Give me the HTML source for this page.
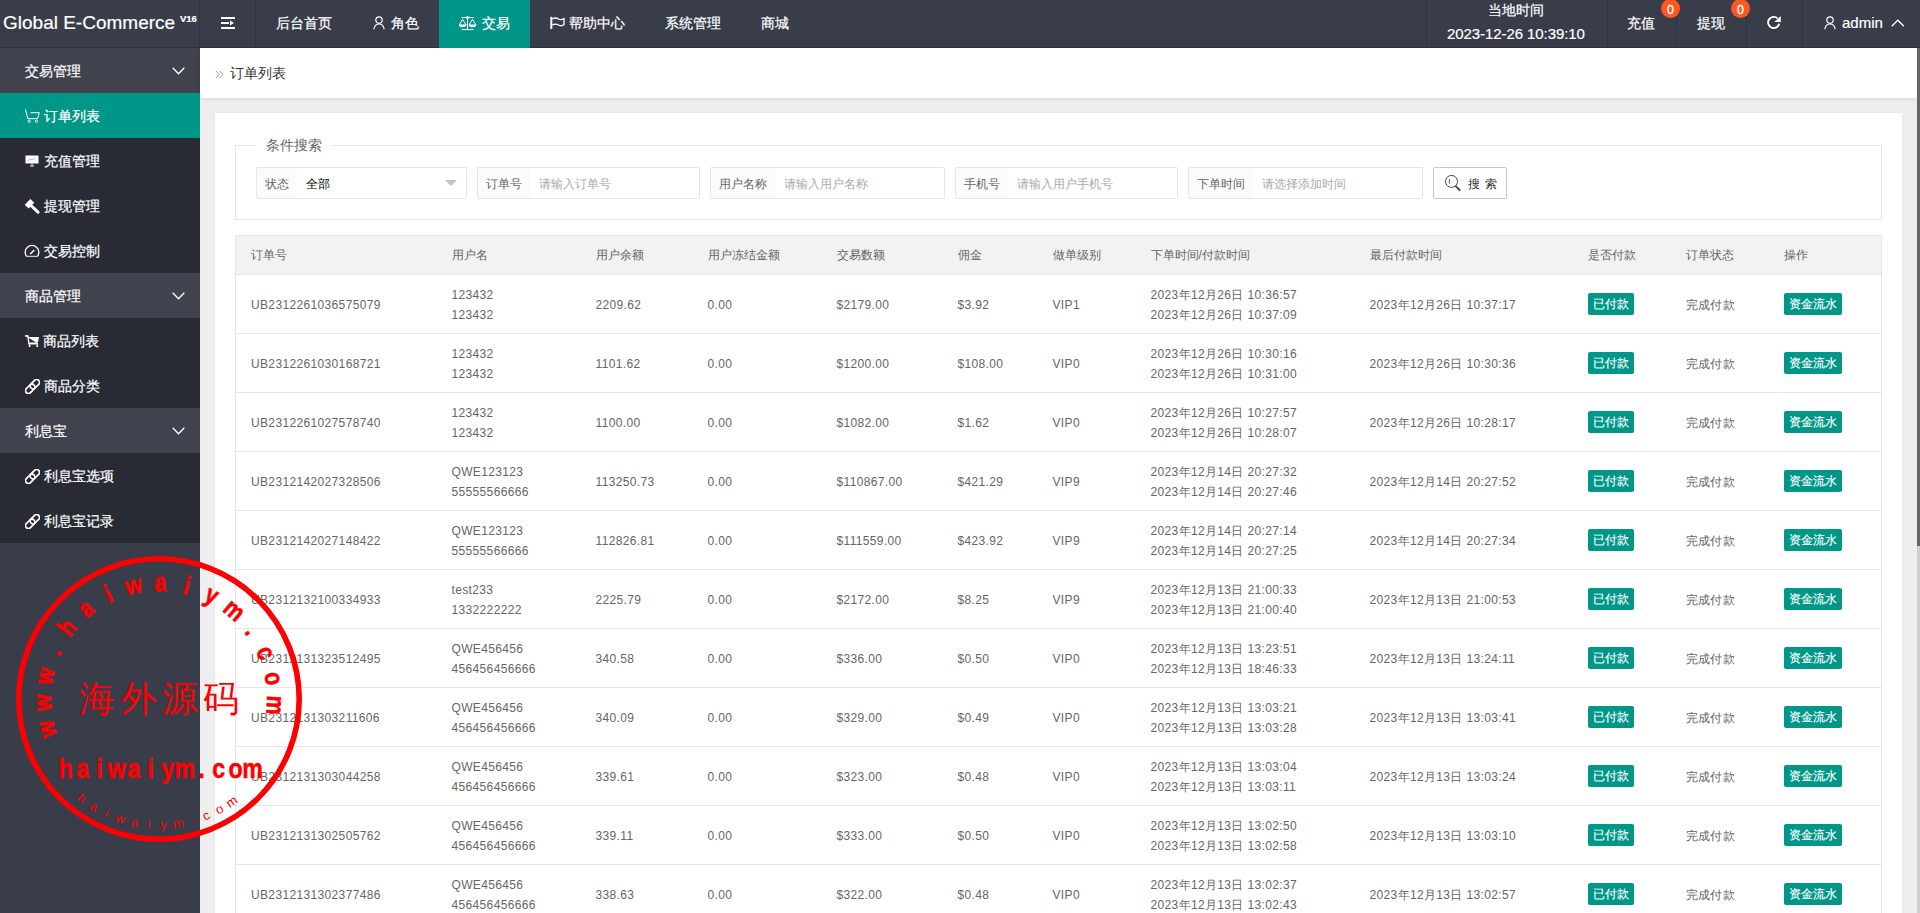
<!DOCTYPE html>
<html><head><meta charset="utf-8">
<style>
*{box-sizing:border-box;margin:0;padding:0}
html,body{width:1920px;height:913px;overflow:hidden}
body{font-family:"Liberation Sans",sans-serif;background:#eee;position:relative;color:#666}
.abs{position:absolute}
#hdr{left:0;top:0;width:1920px;height:48px;background:#393c49;border-bottom:1px solid #2f323e}
.ht{position:absolute;color:#fff;font-size:14px;line-height:16px;white-space:nowrap;-webkit-text-stroke:0.2px #fff}
.vsep{position:absolute;top:0;width:1px;height:47px;background:#30333f}
#side{left:0;top:48px;width:200px;height:865px;background:#393c49}
.grp{position:absolute;left:0;width:200px;height:45px;background:#40434d}
.child{position:absolute;left:0;width:200px;background:#282b34}
.si{position:absolute;color:#fff;font-size:14px;line-height:16px;white-space:nowrap;-webkit-text-stroke:0.2px #fff}
#crumb{left:200px;top:48px;width:1717px;height:50px;background:#fff;box-shadow:0 1px 4px rgba(0,0,0,.1)}
#card{left:215px;top:113px;width:1687px;height:850px;background:#fff;box-shadow:0 1px 3px rgba(0,0,0,.05)}
.fs{position:absolute;left:235px;top:145px;width:1647px;height:75px;border:1px solid #e6e6e6;border-top:none}
.lbl{position:absolute;height:32px;border:1px solid #e6e6e6;background:#fbfbfb;border-radius:2px 0 0 2px;font-size:12px;line-height:32px;color:#666;text-align:center}
.inp{position:absolute;height:32px;border:1px solid #e6e6e6;border-left:none;background:#fff;border-radius:0 2px 2px 0;font-size:12px;line-height:32px;color:#aaa;padding-left:9px}
table{position:absolute;left:235px;top:235px;width:1646px;border-collapse:collapse;table-layout:fixed;font-size:12px;color:#666}
th{height:39px;background:#f2f2f2;font-weight:normal;text-align:left;padding-left:15px;border-top:1px solid #e6e6e6;border-bottom:1px solid #e6e6e6}
td{height:59px;text-align:left;padding-left:15px;padding-top:2px;letter-spacing:0.35px;border-bottom:1px solid #e6e6e6;line-height:20px;white-space:nowrap}
tr td:first-child,tr th:first-child{border-left:1px solid #e6e6e6}
tr td:last-child,tr th:last-child{border-right:1px solid #e6e6e6}
.bdg{display:inline-block;letter-spacing:0;-webkit-text-stroke:0.15px #fff;position:relative;top:-1px;height:22px;line-height:22px;padding:0 5px;background:#009688;color:#fff;border-radius:2px}
#sb{left:1917px;top:48px;width:3px;height:865px;background:#cfcfcf}
#sbt{left:1917px;top:48px;width:3px;height:498px;background:#666}
</style></head><body>

<div id="hdr" class="abs"></div>
<div class="ht" style="left:3px;top:11.5px;font-size:19px;line-height:22px">Global E-Commerce</div><div class="ht" style="left:180px;top:13px;font-size:9.5px;line-height:11px;font-weight:bold">V16</div>
<div class="vsep" style="left:199px"></div>
<div class="vsep" style="left:255px"></div>
<!-- menu icon -->
<svg class="abs" style="left:221px;top:17px" width="14" height="12" viewBox="0 0 14 12"><rect x="0" y="0" width="14" height="2" fill="#fff"/><rect x="0" y="5" width="8" height="2" fill="#fff"/><rect x="0" y="10" width="14" height="2" fill="#fff"/><path d="M9 3.5 L13 6 L9 8.5Z" fill="#fff"/></svg>
<div class="ht" style="left:276px;top:15px">后台首页</div>
<svg class="abs" style="left:373px;top:16px" width="12" height="14" viewBox="0 0 12 14"><circle cx="6" cy="4.1" r="3.2" fill="none" stroke="#fff" stroke-width="1.2"/><path d="M0.9 13.2 C1.3 9.6 3.5 8 6 8 C8.5 8 10.7 9.6 11.1 13.2" fill="none" stroke="#fff" stroke-width="1.2"/></svg>
<div class="ht" style="left:391px;top:15px">角色</div>
<div class="abs" style="left:439px;top:0;width:91px;height:48px;background:#009688"></div>
<svg class="abs" style="left:458px;top:16px" width="19" height="15" viewBox="0 0 19 15"><g stroke="#fff" fill="none" stroke-width="1"><path d="M3.5 1.6 H15.8 M9.5 1.6 V13.6 M3.5 13.6 H15.8"/><circle cx="9.5" cy="1.6" r="1.1" fill="#fff"/><path d="M1.2 9 L4.6 3.3 L8 9 M11.1 9 L14.5 3.3 L17.9 9"/></g><path d="M0.8 8.6 H8.4 A3.8 2.6 0 0 1 0.8 8.6Z M10.7 8.6 H18.3 A3.8 2.6 0 0 1 10.7 8.6Z" fill="#fff"/></svg>
<div class="ht" style="left:482px;top:15px">交易</div>
<svg class="abs" style="left:549px;top:16px" width="17" height="14" viewBox="0 0 17 14"><path d="M2.3 0.8 V13" stroke="#fff" stroke-width="2" fill="none"/><path d="M3.3 3 C5.5 1.6 7.5 1.6 9.5 3 C11.5 4.3 13 3.8 15 2.6 V8.8 C13 10 11.5 10.2 9.5 9 C7.5 7.8 5.5 7.8 3.3 9" stroke="#fff" stroke-width="1.3" fill="none"/></svg>
<div class="ht" style="left:569px;top:15px">帮助中心</div>
<div class="ht" style="left:665px;top:15px">系统管理</div>
<div class="ht" style="left:761px;top:15px">商城</div>

<div class="vsep" style="left:1426px;height:46px"></div>
<div class="ht" style="left:1488px;top:2px">当地时间</div>
<div class="ht" style="left:1447px;top:25px;font-size:15px;line-height:18px;letter-spacing:-0.08px">2023-12-26 10:39:10</div>
<div class="vsep" style="left:1607px"></div>
<div class="ht" style="left:1627px;top:15px">充值</div>

<div class="vsep" style="left:1676px"></div>
<div class="ht" style="left:1697px;top:15px">提现</div>

<div class="vsep" style="left:1746px"></div>
<svg class="abs" style="left:1766px;top:15px" width="16" height="16" viewBox="0 0 16 16"><path d="M13.2 8.6 A5.6 5.6 0 1 1 11.6 3.4" stroke="#fff" stroke-width="1.9" fill="none"/><path d="M8.3 7.1 H14.8 V1.1Z" fill="#fff"/></svg>
<div class="vsep" style="left:1802px"></div>
<div class="abs" style="left:1661px;top:-1px;width:19px;height:19px;border-radius:50%;background:#ff5722;color:#fff;font-size:12.5px;line-height:22px;text-align:center;-webkit-text-stroke:0.3px #fff">0</div>
<div class="abs" style="left:1731px;top:-1px;width:19px;height:19px;border-radius:50%;background:#ff5722;color:#fff;font-size:12.5px;line-height:22px;text-align:center;-webkit-text-stroke:0.3px #fff">0</div>

<svg class="abs" style="left:1824px;top:16px" width="12" height="14" viewBox="0 0 12 14"><circle cx="6" cy="4.1" r="3.2" fill="none" stroke="#fff" stroke-width="1.2"/><path d="M0.9 13.2 C1.3 9.6 3.5 8 6 8 C8.5 8 10.7 9.6 11.1 13.2" fill="none" stroke="#fff" stroke-width="1.2"/></svg>
<div class="ht" style="left:1842px;top:14px;font-size:15px;line-height:18px">admin</div>
<svg class="abs" style="left:1891px;top:18.5px" width="14" height="8" viewBox="0 0 14 8"><path d="M0.7 7.2 L6.8 1.2 L12.9 7.2" stroke="#fff" stroke-width="1.3" fill="none"/></svg>

<!-- sidebar -->
<div id="side" class="abs"></div>
<div class="grp" style="top:48px"></div>
<div class="child" style="top:93px;height:180px"></div>
<div class="abs" style="left:0;top:93px;width:200px;height:45px;background:#009688"></div>
<div class="grp" style="top:273px"></div>
<div class="child" style="top:318px;height:90px"></div>
<div class="grp" style="top:408px"></div>
<div class="child" style="top:453px;height:90px"></div>

<div class="si" style="left:25px;top:63px">交易管理</div>
<svg class="abs" style="left:172px;top:67px" width="13" height="8" viewBox="0 0 13 8"><path d="M0.7 0.7 L6.5 6.8 L12.3 0.7" stroke="#fff" stroke-width="1.3" fill="none"/></svg>
<svg class="abs" style="left:25px;top:109px" width="15" height="14" viewBox="0 0 15 14"><path d="M0.4 0.2 L2.8 9.7 H12.6 L14.3 3.7 H5.6" stroke="#fff" stroke-width="1" fill="none"/><circle cx="4.2" cy="12.3" r="1.2" fill="none" stroke="#fff" stroke-width="0.9"/><circle cx="11.4" cy="12.3" r="1.2" fill="none" stroke="#fff" stroke-width="0.9"/></svg>
<div class="si" style="left:44px;top:108px">订单列表</div>
<svg class="abs" style="left:25px;top:155px" width="14" height="12" viewBox="0 0 14 12"><rect x="0.5" y="0.5" width="13" height="8" fill="#fff"/><path d="M2.5 6 L5 4 L7 5 L10.5 3" stroke="#888" stroke-width="0.6" fill="none"/><path d="M7 8.5 V10.5 M5 11 H9" stroke="#fff" stroke-width="1"/></svg>
<div class="si" style="left:44px;top:153px">充值管理</div>
<svg class="abs" style="left:24px;top:198px" width="16" height="16" viewBox="0 0 16 16"><rect x="1.5" y="3" width="8" height="5.5" transform="rotate(-45 5.5 5.75)" fill="#fff"/><path d="M7.5 8 L14 14.2" stroke="#fff" stroke-width="3" stroke-linecap="round"/></svg>
<div class="si" style="left:44px;top:198px">提现管理</div>
<svg class="abs" style="left:24px;top:244px" width="16" height="14" viewBox="0 0 16 14"><path d="M2.6 12.3 A6.8 6.8 0 1 1 13.4 12.3" stroke="#fff" stroke-width="1.3" fill="none"/><path d="M2.2 12.4 H13.8" stroke="#c8c8c8" stroke-width="1.3"/><path d="M6.3 10 L10.3 6" stroke="#fff" stroke-width="1.5"/></svg>
<div class="si" style="left:44px;top:243px">交易控制</div>

<div class="si" style="left:25px;top:288px">商品管理</div>
<svg class="abs" style="left:172px;top:292px" width="13" height="8" viewBox="0 0 13 8"><path d="M0.7 0.7 L6.5 6.8 L12.3 0.7" stroke="#fff" stroke-width="1.3" fill="none"/></svg>
<svg class="abs" style="left:25px;top:335px" width="14" height="13" viewBox="0 0 14 13"><path d="M0 0.5 H3 L3.6 2 H14 L13 7.5 H4.5 L4.5 8.8 H13" stroke="none" fill="#fff"/><path d="M0 1 H2.8 L4 8.7 H13" stroke="#fff" stroke-width="1.4" fill="none"/><rect x="3.8" y="9.5" width="1.6" height="2.5" fill="#fff"/><rect x="11.5" y="9.5" width="1.6" height="2.5" fill="#fff"/></svg>
<div class="si" style="left:43px;top:333px">商品列表</div>
<svg class="abs" style="left:25px;top:379px" width="15" height="15" viewBox="0 0 15 15"><g transform="rotate(-45 7.5 7.5)" stroke="#fff" stroke-width="1.7" fill="none"><path d="M1.7 4.6 H6.699999999999999 A2.9 2.9 0 0 1 6.699999999999999 10.4 H1.7 A2.9 2.9 0 0 1 1.7 4.6 Z"/><path d="M8.3 4.6 H13.299999999999999 A2.9 2.9 0 0 1 13.299999999999999 10.4 H8.3 A2.9 2.9 0 0 1 8.3 4.6 Z"/></g></svg>
<div class="si" style="left:44px;top:378px">商品分类</div>

<div class="si" style="left:25px;top:423px">利息宝</div>
<svg class="abs" style="left:172px;top:427px" width="13" height="8" viewBox="0 0 13 8"><path d="M0.7 0.7 L6.5 6.8 L12.3 0.7" stroke="#fff" stroke-width="1.3" fill="none"/></svg>
<svg class="abs" style="left:25px;top:469px" width="15" height="15" viewBox="0 0 15 15"><g transform="rotate(-45 7.5 7.5)" stroke="#fff" stroke-width="1.7" fill="none"><path d="M1.7 4.6 H6.699999999999999 A2.9 2.9 0 0 1 6.699999999999999 10.4 H1.7 A2.9 2.9 0 0 1 1.7 4.6 Z"/><path d="M8.3 4.6 H13.299999999999999 A2.9 2.9 0 0 1 13.299999999999999 10.4 H8.3 A2.9 2.9 0 0 1 8.3 4.6 Z"/></g></svg>
<div class="si" style="left:44px;top:468px">利息宝选项</div>
<svg class="abs" style="left:25px;top:514px" width="15" height="15" viewBox="0 0 15 15"><g transform="rotate(-45 7.5 7.5)" stroke="#fff" stroke-width="1.7" fill="none"><path d="M1.7 4.6 H6.699999999999999 A2.9 2.9 0 0 1 6.699999999999999 10.4 H1.7 A2.9 2.9 0 0 1 1.7 4.6 Z"/><path d="M8.3 4.6 H13.299999999999999 A2.9 2.9 0 0 1 13.299999999999999 10.4 H8.3 A2.9 2.9 0 0 1 8.3 4.6 Z"/></g></svg>
<div class="si" style="left:44px;top:513px">利息宝记录</div>

<!-- breadcrumb -->
<div id="crumb" class="abs"></div>
<svg class="abs" style="left:215px;top:70px" width="9" height="9" viewBox="0 0 9 9"><path d="M0.8 0.8 L4 4.5 L0.8 8.2 M4.6 0.8 L7.8 4.5 L4.6 8.2" stroke="#999" stroke-width="1" fill="none"/></svg>
<div class="abs" style="left:230px;top:65px;font-size:14px;line-height:16px;color:#333">订单列表</div>

<div id="card" class="abs"></div>
<!-- fieldset -->
<div class="fs"></div>
<div class="abs" style="left:235px;top:145px;width:21px;height:1px;background:#e6e6e6"></div>
<div class="abs" style="left:332px;top:145px;width:1550px;height:1px;background:#e6e6e6"></div>
<div class="abs" style="left:266px;top:137px;font-size:14px;line-height:16px;color:#666">条件搜索</div>

<div class="lbl" style="left:256px;top:167px;width:42px">状态</div>
<div class="inp" style="left:297px;top:167px;width:170px;color:#000">全部</div>
<svg class="abs" style="left:445px;top:180px" width="12" height="6" viewBox="0 0 12 6"><path d="M0 0 H12 L6 6Z" fill="#c2c2c2"/></svg>
<div class="lbl" style="left:477px;top:167px;width:54px">订单号</div>
<div class="inp" style="left:530px;top:167px;width:170px">请输入订单号</div>
<div class="lbl" style="left:710px;top:167px;width:66px">用户名称</div>
<div class="inp" style="left:775px;top:167px;width:170px">请输入用户名称</div>
<div class="lbl" style="left:955px;top:167px;width:54px">手机号</div>
<div class="inp" style="left:1008px;top:167px;width:170px">请输入用户手机号</div>
<div class="lbl" style="left:1188px;top:167px;width:66px">下单时间</div>
<div class="inp" style="left:1253px;top:167px;width:170px">请选择添加时间</div>
<div class="abs" style="left:1433px;top:167px;width:74px;height:32px;border:1px solid #c9c9c9;border-radius:2px;background:#fff"></div>
<svg class="abs" style="left:1444px;top:174px" width="18" height="18" viewBox="0 0 18 18"><circle cx="7.5" cy="7.4" r="6" stroke="#444" stroke-width="1" fill="none"/><path d="M12 12.3 L15.6 16" stroke="#444" stroke-width="1.9" stroke-linecap="round"/><path d="M5.6 5.2 Q4.6 7.4 5.6 9.6" stroke="#444" stroke-width="0.9" fill="none"/></svg>
<div class="abs" style="left:1468px;top:177px;font-size:12px;line-height:14px;color:#333;letter-spacing:4.5px">搜索</div>

<table id="tbl">
<colgroup><col style="width:201px"><col style="width:144px"><col style="width:112px"><col style="width:129px"><col style="width:121px"><col style="width:95px"><col style="width:98px"><col style="width:219px"><col style="width:218px"><col style="width:98px"><col style="width:98px"><col style="width:113px"></colgroup>
<thead><tr><th>订单号</th><th>用户名</th><th>用户余额</th><th>用户冻结金额</th><th>交易数额</th><th>佣金</th><th>做单级别</th><th>下单时间/付款时间</th><th>最后付款时间</th><th>是否付款</th><th>订单状态</th><th>操作</th></tr></thead>
<tbody id="tb">
<tr><td>UB2312261036575079</td><td>123432<br>123432</td><td>2209.62</td><td>0.00</td><td>$2179.00</td><td>$3.92</td><td>VIP1</td><td>2023年12月26日 10:36:57<br>2023年12月26日 10:37:09</td><td>2023年12月26日 10:37:17</td><td><span class="bdg">已付款</span></td><td>完成付款</td><td><span class="bdg">资金流水</span></td></tr>
<tr><td>UB2312261030168721</td><td>123432<br>123432</td><td>1101.62</td><td>0.00</td><td>$1200.00</td><td>$108.00</td><td>VIP0</td><td>2023年12月26日 10:30:16<br>2023年12月26日 10:31:00</td><td>2023年12月26日 10:30:36</td><td><span class="bdg">已付款</span></td><td>完成付款</td><td><span class="bdg">资金流水</span></td></tr>
<tr><td>UB2312261027578740</td><td>123432<br>123432</td><td>1100.00</td><td>0.00</td><td>$1082.00</td><td>$1.62</td><td>VIP0</td><td>2023年12月26日 10:27:57<br>2023年12月26日 10:28:07</td><td>2023年12月26日 10:28:17</td><td><span class="bdg">已付款</span></td><td>完成付款</td><td><span class="bdg">资金流水</span></td></tr>
<tr><td>UB2312142027328506</td><td>QWE123123<br>55555566666</td><td>113250.73</td><td>0.00</td><td>$110867.00</td><td>$421.29</td><td>VIP9</td><td>2023年12月14日 20:27:32<br>2023年12月14日 20:27:46</td><td>2023年12月14日 20:27:52</td><td><span class="bdg">已付款</span></td><td>完成付款</td><td><span class="bdg">资金流水</span></td></tr>
<tr><td>UB2312142027148422</td><td>QWE123123<br>55555566666</td><td>112826.81</td><td>0.00</td><td>$111559.00</td><td>$423.92</td><td>VIP9</td><td>2023年12月14日 20:27:14<br>2023年12月14日 20:27:25</td><td>2023年12月14日 20:27:34</td><td><span class="bdg">已付款</span></td><td>完成付款</td><td><span class="bdg">资金流水</span></td></tr>
<tr><td>UB2312132100334933</td><td>test233<br>1332222222</td><td>2225.79</td><td>0.00</td><td>$2172.00</td><td>$8.25</td><td>VIP9</td><td>2023年12月13日 21:00:33<br>2023年12月13日 21:00:40</td><td>2023年12月13日 21:00:53</td><td><span class="bdg">已付款</span></td><td>完成付款</td><td><span class="bdg">资金流水</span></td></tr>
<tr><td>UB2312131323512495</td><td>QWE456456<br>456456456666</td><td>340.58</td><td>0.00</td><td>$336.00</td><td>$0.50</td><td>VIP0</td><td>2023年12月13日 13:23:51<br>2023年12月13日 18:46:33</td><td>2023年12月13日 13:24:11</td><td><span class="bdg">已付款</span></td><td>完成付款</td><td><span class="bdg">资金流水</span></td></tr>
<tr><td>UB2312131303211606</td><td>QWE456456<br>456456456666</td><td>340.09</td><td>0.00</td><td>$329.00</td><td>$0.49</td><td>VIP0</td><td>2023年12月13日 13:03:21<br>2023年12月13日 13:03:28</td><td>2023年12月13日 13:03:41</td><td><span class="bdg">已付款</span></td><td>完成付款</td><td><span class="bdg">资金流水</span></td></tr>
<tr><td>UB2312131303044258</td><td>QWE456456<br>456456456666</td><td>339.61</td><td>0.00</td><td>$323.00</td><td>$0.48</td><td>VIP0</td><td>2023年12月13日 13:03:04<br>2023年12月13日 13:03:11</td><td>2023年12月13日 13:03:24</td><td><span class="bdg">已付款</span></td><td>完成付款</td><td><span class="bdg">资金流水</span></td></tr>
<tr><td>UB2312131302505762</td><td>QWE456456<br>456456456666</td><td>339.11</td><td>0.00</td><td>$333.00</td><td>$0.50</td><td>VIP0</td><td>2023年12月13日 13:02:50<br>2023年12月13日 13:02:58</td><td>2023年12月13日 13:03:10</td><td><span class="bdg">已付款</span></td><td>完成付款</td><td><span class="bdg">资金流水</span></td></tr>
<tr><td>UB2312131302377486</td><td>QWE456456<br>456456456666</td><td>338.63</td><td>0.00</td><td>$322.00</td><td>$0.48</td><td>VIP0</td><td>2023年12月13日 13:02:37<br>2023年12月13日 13:02:43</td><td>2023年12月13日 13:02:57</td><td><span class="bdg">已付款</span></td><td>完成付款</td><td><span class="bdg">资金流水</span></td></tr>
</tbody>
</table>

<div id="sb" class="abs"></div>
<div id="sbt" class="abs"></div>
<!--STAMP--><svg class="abs" style="left:0;top:540px;pointer-events:none" width="320" height="320" viewBox="0 0 320 320">
<circle cx="159" cy="159" r="140.2" fill="none" stroke="#f00" stroke-width="5.6"/>
<text transform="translate(159 159) rotate(-105.0) translate(0 -108) scale(0.82 1)" x="0" y="0" text-anchor="middle" font-family="Liberation Sans" font-weight="bold" font-size="26" fill="#f00" stroke="#f00" stroke-width="0.6">w</text>
<text transform="translate(159 159) rotate(-91.8) translate(0 -108) scale(0.82 1)" x="0" y="0" text-anchor="middle" font-family="Liberation Sans" font-weight="bold" font-size="26" fill="#f00" stroke="#f00" stroke-width="0.6">w</text>
<text transform="translate(159 159) rotate(-78.6) translate(0 -108) scale(0.82 1)" x="0" y="0" text-anchor="middle" font-family="Liberation Sans" font-weight="bold" font-size="26" fill="#f00" stroke="#f00" stroke-width="0.6">w</text>
<text transform="translate(159 159) rotate(-65.4) translate(0 -108) scale(0.82 1)" x="0" y="0" text-anchor="middle" font-family="Liberation Sans" font-weight="bold" font-size="26" fill="#f00" stroke="#f00" stroke-width="0.6">.</text>
<text transform="translate(159 159) rotate(-52.2) translate(0 -108) scale(0.82 1)" x="0" y="0" text-anchor="middle" font-family="Liberation Sans" font-weight="bold" font-size="26" fill="#f00" stroke="#f00" stroke-width="0.6">h</text>
<text transform="translate(159 159) rotate(-39.0) translate(0 -108) scale(0.82 1)" x="0" y="0" text-anchor="middle" font-family="Liberation Sans" font-weight="bold" font-size="26" fill="#f00" stroke="#f00" stroke-width="0.6">a</text>
<text transform="translate(159 159) rotate(-25.8) translate(0 -108) scale(0.82 1)" x="0" y="0" text-anchor="middle" font-family="Liberation Sans" font-weight="bold" font-size="26" fill="#f00" stroke="#f00" stroke-width="0.6">i</text>
<text transform="translate(159 159) rotate(-12.6) translate(0 -108) scale(0.82 1)" x="0" y="0" text-anchor="middle" font-family="Liberation Sans" font-weight="bold" font-size="26" fill="#f00" stroke="#f00" stroke-width="0.6">w</text>
<text transform="translate(159 159) rotate(0.6) translate(0 -108) scale(0.82 1)" x="0" y="0" text-anchor="middle" font-family="Liberation Sans" font-weight="bold" font-size="26" fill="#f00" stroke="#f00" stroke-width="0.6">a</text>
<text transform="translate(159 159) rotate(13.8) translate(0 -108) scale(0.82 1)" x="0" y="0" text-anchor="middle" font-family="Liberation Sans" font-weight="bold" font-size="26" fill="#f00" stroke="#f00" stroke-width="0.6">i</text>
<text transform="translate(159 159) rotate(27.0) translate(0 -108) scale(0.82 1)" x="0" y="0" text-anchor="middle" font-family="Liberation Sans" font-weight="bold" font-size="26" fill="#f00" stroke="#f00" stroke-width="0.6">y</text>
<text transform="translate(159 159) rotate(40.2) translate(0 -108) scale(0.82 1)" x="0" y="0" text-anchor="middle" font-family="Liberation Sans" font-weight="bold" font-size="26" fill="#f00" stroke="#f00" stroke-width="0.6">m</text>
<text transform="translate(159 159) rotate(53.4) translate(0 -108) scale(0.82 1)" x="0" y="0" text-anchor="middle" font-family="Liberation Sans" font-weight="bold" font-size="26" fill="#f00" stroke="#f00" stroke-width="0.6">.</text>
<text transform="translate(159 159) rotate(66.6) translate(0 -108) scale(0.82 1)" x="0" y="0" text-anchor="middle" font-family="Liberation Sans" font-weight="bold" font-size="26" fill="#f00" stroke="#f00" stroke-width="0.6">c</text>
<text transform="translate(159 159) rotate(79.8) translate(0 -108) scale(0.82 1)" x="0" y="0" text-anchor="middle" font-family="Liberation Sans" font-weight="bold" font-size="26" fill="#f00" stroke="#f00" stroke-width="0.6">o</text>
<text transform="translate(159 159) rotate(93.0) translate(0 -108) scale(0.82 1)" x="0" y="0" text-anchor="middle" font-family="Liberation Sans" font-weight="bold" font-size="26" fill="#f00" stroke="#f00" stroke-width="0.6">m</text>
<text transform="translate(159 159) rotate(37.80)" x="0" y="130" text-anchor="middle" font-family="Liberation Sans" font-size="13" fill="#f00">h</text>
<text transform="translate(159 159) rotate(31.15)" x="0" y="130" text-anchor="middle" font-family="Liberation Sans" font-size="13" fill="#f00">a</text>
<text transform="translate(159 159) rotate(24.50)" x="0" y="130" text-anchor="middle" font-family="Liberation Sans" font-size="13" fill="#f00">i</text>
<text transform="translate(159 159) rotate(17.85)" x="0" y="130" text-anchor="middle" font-family="Liberation Sans" font-size="13" fill="#f00">w</text>
<text transform="translate(159 159) rotate(11.20)" x="0" y="130" text-anchor="middle" font-family="Liberation Sans" font-size="13" fill="#f00">a</text>
<text transform="translate(159 159) rotate(4.55)" x="0" y="130" text-anchor="middle" font-family="Liberation Sans" font-size="13" fill="#f00">i</text>
<text transform="translate(159 159) rotate(-2.10)" x="0" y="130" text-anchor="middle" font-family="Liberation Sans" font-size="13" fill="#f00">y</text>
<text transform="translate(159 159) rotate(-8.75)" x="0" y="130" text-anchor="middle" font-family="Liberation Sans" font-size="13" fill="#f00">m</text>
<text transform="translate(159 159) rotate(-15.40)" x="0" y="130" text-anchor="middle" font-family="Liberation Sans" font-size="13" fill="#f00">.</text>
<text transform="translate(159 159) rotate(-22.05)" x="0" y="130" text-anchor="middle" font-family="Liberation Sans" font-size="13" fill="#f00">c</text>
<text transform="translate(159 159) rotate(-28.70)" x="0" y="130" text-anchor="middle" font-family="Liberation Sans" font-size="13" fill="#f00">o</text>
<text transform="translate(159 159) rotate(-35.35)" x="0" y="130" text-anchor="middle" font-family="Liberation Sans" font-size="13" fill="#f00">m</text>
<text transform="translate(65.6 238) scale(0.86 1)" x="0" y="0" text-anchor="middle" font-family="Liberation Sans" font-weight="bold" font-size="27" fill="#f00" stroke="#f00" stroke-width="0.5">h</text>
<text transform="translate(82.6 238) scale(0.86 1)" x="0" y="0" text-anchor="middle" font-family="Liberation Sans" font-weight="bold" font-size="27" fill="#f00" stroke="#f00" stroke-width="0.5">a</text>
<text transform="translate(99.6 238) scale(0.86 1)" x="0" y="0" text-anchor="middle" font-family="Liberation Sans" font-weight="bold" font-size="27" fill="#f00" stroke="#f00" stroke-width="0.5">i</text>
<text transform="translate(116.6 238) scale(0.86 1)" x="0" y="0" text-anchor="middle" font-family="Liberation Sans" font-weight="bold" font-size="27" fill="#f00" stroke="#f00" stroke-width="0.5">w</text>
<text transform="translate(133.6 238) scale(0.86 1)" x="0" y="0" text-anchor="middle" font-family="Liberation Sans" font-weight="bold" font-size="27" fill="#f00" stroke="#f00" stroke-width="0.5">a</text>
<text transform="translate(150.6 238) scale(0.86 1)" x="0" y="0" text-anchor="middle" font-family="Liberation Sans" font-weight="bold" font-size="27" fill="#f00" stroke="#f00" stroke-width="0.5">i</text>
<text transform="translate(167.6 238) scale(0.86 1)" x="0" y="0" text-anchor="middle" font-family="Liberation Sans" font-weight="bold" font-size="27" fill="#f00" stroke="#f00" stroke-width="0.5">y</text>
<text transform="translate(184.6 238) scale(0.86 1)" x="0" y="0" text-anchor="middle" font-family="Liberation Sans" font-weight="bold" font-size="27" fill="#f00" stroke="#f00" stroke-width="0.5">m</text>
<text transform="translate(201.6 238) scale(0.86 1)" x="0" y="0" text-anchor="middle" font-family="Liberation Sans" font-weight="bold" font-size="27" fill="#f00" stroke="#f00" stroke-width="0.5">.</text>
<text transform="translate(218.6 238) scale(0.86 1)" x="0" y="0" text-anchor="middle" font-family="Liberation Sans" font-weight="bold" font-size="27" fill="#f00" stroke="#f00" stroke-width="0.5">c</text>
<text transform="translate(235.6 238) scale(0.86 1)" x="0" y="0" text-anchor="middle" font-family="Liberation Sans" font-weight="bold" font-size="27" fill="#f00" stroke="#f00" stroke-width="0.5">o</text>
<text transform="translate(252.6 238) scale(0.86 1)" x="0" y="0" text-anchor="middle" font-family="Liberation Sans" font-weight="bold" font-size="27" fill="#f00" stroke="#f00" stroke-width="0.5">m</text>
<text x="97.4" y="171" text-anchor="middle" font-family="Liberation Serif" font-size="36" fill="#f00">海</text>
<text x="138.5" y="171" text-anchor="middle" font-family="Liberation Serif" font-size="36" fill="#f00">外</text>
<text x="179.6" y="171" text-anchor="middle" font-family="Liberation Serif" font-size="36" fill="#f00">源</text>
<text x="220.7" y="171" text-anchor="middle" font-family="Liberation Serif" font-size="36" fill="#f00">码</text>
</svg><!--/STAMP-->
</body></html>
